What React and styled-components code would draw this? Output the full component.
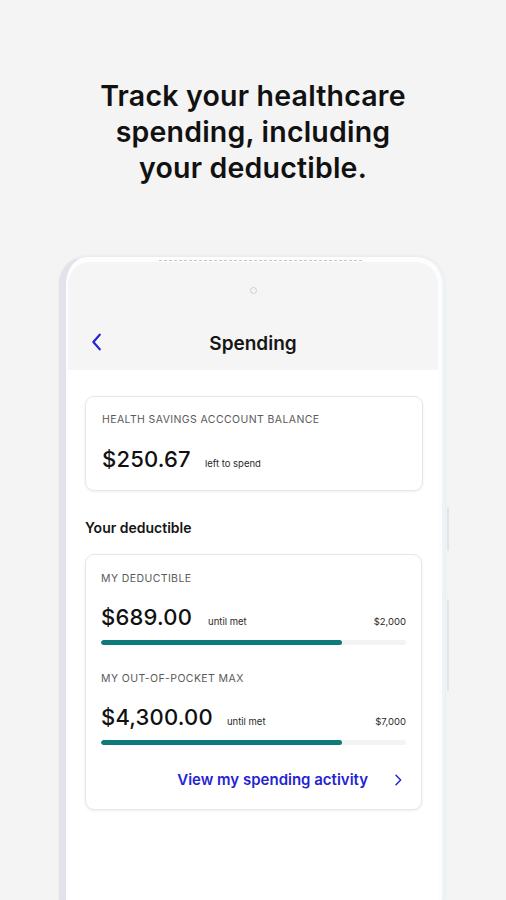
import React from 'react';
import styled, { createGlobalStyle } from 'styled-components';

const GlobalStyle = createGlobalStyle`
    html, body {
        margin: 0;
        padding: 0;
        background: #f4f4f4;
        font-family: Inter, "Noto Sans", sans-serif;
        color: #121212;
    }
    #root {
        height: 900px;
        overflow: hidden;
    }
`;

const Page = styled.div`
    height: 900px;
    overflow: hidden;
    display: flex;
    flex-direction: column;
`;

const Headline = styled.h1`
    margin: 78px 0 0;
    text-align: center;
    font-size: 28.5px;
    line-height: 36px;
    font-weight: 600;
    letter-spacing: 0.2px;
    color: #111;
`;

const Phone = styled.div`
    position: relative;
    margin: 70px 0 0 59px;
    width: 386px;
    flex: 1;
    background: #fdfdfe;
    border-radius: 28px 28px 0 0;
    border-left: 7px solid #e2e2ea;
    border-top: 1px solid #ececf0;
    border-right: 3px solid #eef3f7;
    box-sizing: border-box;
    padding: 5px 4px 0 2px;
    box-shadow: 0 0 3px rgba(0, 0, 0, 0.06);

    &::before {
        content: '';
        position: absolute;
        left: 93px;
        top: 3px;
        width: 203px;
        border-top: 1px dashed #c8c8cc;
    }
`;

const SideKey = styled.span`
    position: absolute;
    right: -7px;
    top: ${(p) => p.$top}px;
    height: ${(p) => p.$h}px;
    width: 2px;
    background: #e4e4e8;
    border-radius: 1px;
`;

const Screen = styled.div`
    height: 100%;
    background: #fff;
    border-radius: 22px 22px 0 0;
    overflow: hidden;
    display: flex;
    flex-direction: column;
`;

const TopBar = styled.div`
    background: #f5f5f5;
    height: 108px;
    display: flex;
    flex-direction: column;
    align-items: center;
`;

const Camera = styled.div`
    margin-top: 25px;
    width: 5px;
    height: 5px;
    border-radius: 50%;
    border: 1px solid #cfcfd2;
`;

const NavRow = styled.div`
    margin-top: 38px;
    width: 100%;
    display: flex;
    align-items: center;
    justify-content: center;
    position: relative;
`;

const BackButton = styled.button`
    position: absolute;
    left: 18px;
    top: -1px;
    background: none;
    border: 0;
    padding: 0;
    display: flex;
`;

const Title = styled.div`
    font-size: 19px;
    font-weight: 600;
    color: #161616;
    line-height: 24px;
`;

const Content = styled.div`
    padding: 26px 17px 0 17px;
    display: flex;
    flex-direction: column;
`;

const Card = styled.div`
    background: #fff;
    border: 1px solid #e7e7e9;
    border-radius: 9px;
    box-shadow: 0 1px 3px rgba(0, 0, 0, 0.07);
    padding: ${(p) => p.$pad || '17px 15px 0'};
    width: ${(p) => p.$w}px;
    box-sizing: border-box;
`;

const Label = styled.div`
    font-size: 10.5px;
    letter-spacing: 0.4px;
    color: #5a5a5a;
    line-height: 14px;
    text-transform: uppercase;
`;

const AmountRow = styled.div`
    display: flex;
    align-items: baseline;
    margin-top: ${(p) => p.$mt || 16}px;
`;

const Amount = styled.span`
    font-size: 22px;
    font-weight: 500;
    color: #111;
    letter-spacing: 0.2px;
    margin-right: ${(p) => p.$gap || 14}px;
`;

const Small = styled.span`
    font-size: 9.5px;
    color: #2a2a2a;
    margin-left: auto;
    ${(p) => p.$left && 'margin-left: 0;'}
`;

const SectionTitle = styled.div`
    font-size: 14px;
    font-weight: 600;
    color: #151515;
    margin: 28px 0 18px 0;
`;

const Track = styled.div`
    margin-top: 10px;
    height: 5px;
    border-radius: 3px;
    background: #f2f3f3;
    overflow: hidden;
`;

const Fill = styled.div`
    height: 100%;
    background: #0e7a7a;
    border-radius: 3px;
`;

const Block = styled.div`
    margin-bottom: ${(p) => p.$mb || 0}px;
`;

const LinkRow = styled.a`
    display: flex;
    align-items: center;
    justify-content: flex-end;
    gap: 22px;
    margin: 25px 0 0 0;
    padding-bottom: 20px;
    color: #2424d2;
    font-size: 15px;
    font-weight: 600;
    text-decoration: none;
`;

const Chevron = ({ dir = 'left', size = 20, color = '#2424d2', stroke = 2.4 }) => (
    <svg width={size} height={size} viewBox="0 0 24 24" fill="none" stroke={color} strokeWidth={stroke} strokeLinecap="round" strokeLinejoin="round">
        {dir === 'left' ? <path d="M15 4 L8 12 L15 20" /> : <path d="M9 5 L16 12 L9 19" />}
    </svg>
);

const Meter = ({ label, amount, gap, max, pct, mb }) => (
    <Block $mb={mb}>
        <Label>{label}</Label>
        <AmountRow $mt={18}>
            <Amount $gap={gap}>{amount}</Amount>
            <Small $left>until met</Small>
            <Small>{max}</Small>
        </AmountRow>
        <Track>
            <Fill style={{ width: `${pct}%` }} />
        </Track>
    </Block>
);

export default function App() {
    return (
        <Page>
            <GlobalStyle />
            <Headline>
                Track your healthcare
                <br />
                spending, including
                <br />
                your deductible.
            </Headline>
            <Phone>
                <SideKey $top={250} $h={44} />
                <SideKey $top={342} $h={92} />
                <Screen>
                    <TopBar>
                        <Camera />
                        <NavRow>
                            <BackButton>
                                <Chevron size={22} />
                            </BackButton>
                            <Title>Spending</Title>
                        </NavRow>
                    </TopBar>
                    <Content>
                        <Card $w={338} $pad="16px 16px 18px">
                            <Label>Health Savings Acccount Balance</Label>
                            <AmountRow $mt={19}>
                                <Amount>$250.67</Amount>
                                <Small $left>left to spend</Small>
                            </AmountRow>
                        </Card>
                        <SectionTitle>Your deductible</SectionTitle>
                        <Card $w={337}>
                            <Meter label="My deductible" amount="$689.00" gap={16} max="$2,000" pct={79} mb={27} />
                            <Meter label="My out-of-pocket max" amount="$4,300.00" gap={14} max="$7,000" pct={79} />
                            <LinkRow href="#">
                                View my spending activity
                                <Chevron dir="right" size={16} stroke={2.2} />
                            </LinkRow>
                        </Card>
                    </Content>
                </Screen>
            </Phone>
        </Page>
    );
}
